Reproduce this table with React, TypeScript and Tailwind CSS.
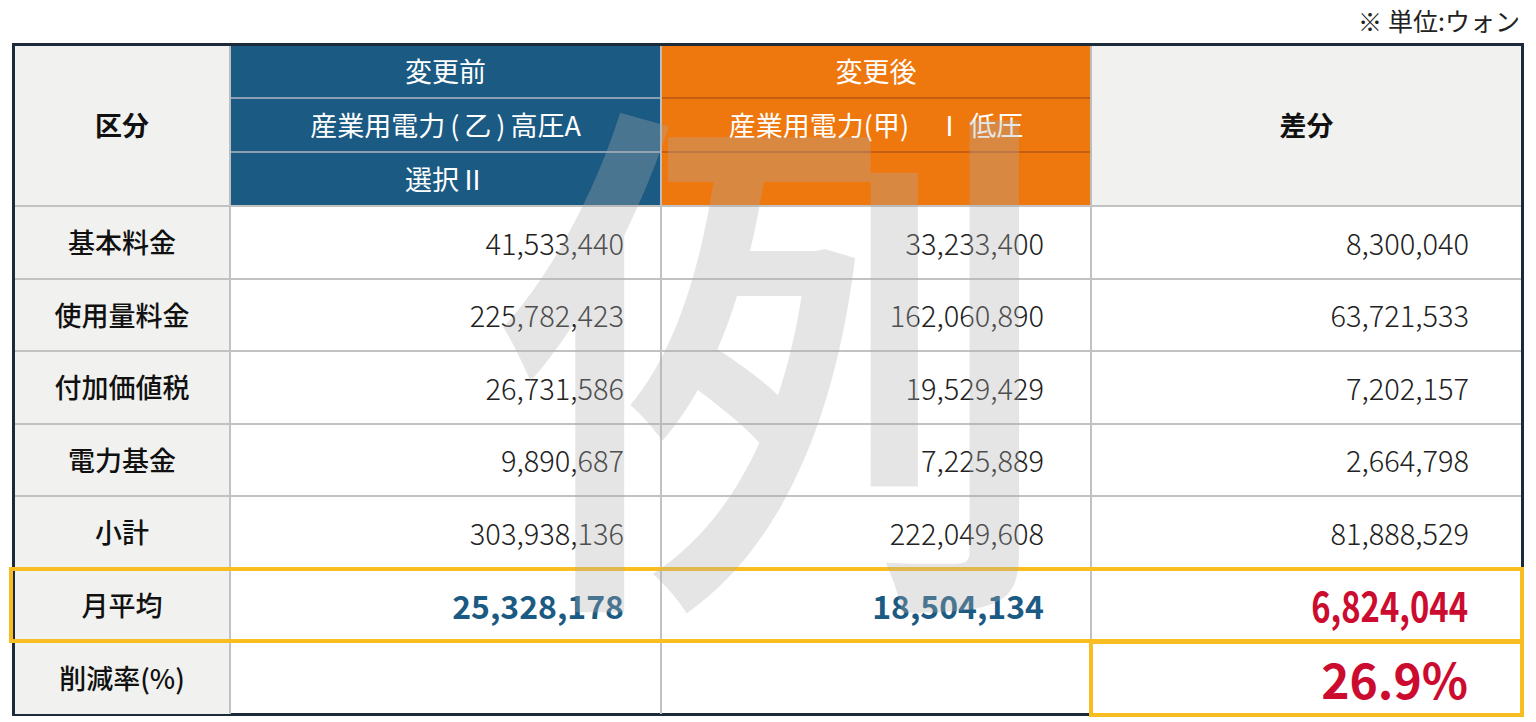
import React from "react";

const rows = [
  { label: "基本料金", before: "41,533,440", after: "33,233,400", diff: "8,300,040" },
  { label: "使用量料金", before: "225,782,423", after: "162,060,890", diff: "63,721,533" },
  { label: "付加価値税", before: "26,731,586", after: "19,529,429", diff: "7,202,157" },
  { label: "電力基金", before: "9,890,687", after: "7,225,889", diff: "2,664,798" },
  { label: "小計", before: "303,938,136", after: "222,049,608", diff: "81,888,529" },
];

const font = "font-['Noto_Sans_CJK_JP','Noto_Sans',sans-serif]";

export default function App() {
  return (
    <div className={`relative w-[1536px] h-[722px] bg-white overflow-hidden ${font}`}>
      <div className="h-[43px] flex items-center justify-end pr-[16px] pb-[2px] text-[25px] leading-none text-[#222]">
        <span className="text-[24px] font-bold mr-[6px]">※</span>単位:ウォン
      </div>

      <div className="relative mx-[12px] border-[3px] border-[#1c2b39]">
        {/* header */}
        <div className="grid grid-cols-[214px_431px_430px_431px] h-[159px]">
          <div className="bg-[#f1f1f0] flex items-center justify-center text-[27px] font-bold text-[#111]">区分</div>
          <div className="bg-[#1b5a82] border-l-2 border-[#bdbdbd] flex flex-col text-white text-[27px]">
            <div className="h-[51px] flex items-center justify-center">変更前</div>
            <div className="h-[54px] border-t-2 border-[#8a9fb1] flex items-center justify-center">
              産業用電力<span className="px-[5px]">(</span>乙<span className="px-[5px]">)</span>高圧A
            </div>
            <div className="flex-1 border-t-2 border-[#8a9fb1] flex items-center justify-center">選択Ⅱ</div>
          </div>
          <div className="bg-[#ee770e] border-l-2 border-[#bdbdbd] flex flex-col text-white text-[27px]">
            <div className="h-[51px] flex items-center justify-center">変更後</div>
            <div className="h-[54px] border-t-2 border-[#c35e12] flex items-center justify-center">産業用電力(甲)　Ⅰ 低圧</div>
            <div className="flex-1 border-t-2 border-[#c35e12]"></div>
          </div>
          <div className="bg-[#f1f1f0] border-l-2 border-[#bdbdbd] flex items-center justify-center text-[27px] font-bold text-[#111]">差分</div>
        </div>

        {/* body */}
        {rows.map((r) => (
          <div key={r.label} className="grid grid-cols-[214px_431px_430px_431px] h-[72.5px] border-t-2 border-[#c2c2c2]">
            <div className="bg-[#f1f1f0] flex items-center justify-center text-[27px] font-medium text-[#111]">{r.label}</div>
            <div className="border-l-2 border-[#c2c2c2] flex items-center justify-end pr-[36px] text-[29px] font-light text-[#222]">{r.before}</div>
            <div className="border-l-2 border-[#c2c2c2] flex items-center justify-end pr-[46px] text-[29px] font-light text-[#222]">{r.after}</div>
            <div className="border-l-2 border-[#c2c2c2] flex items-center justify-end pr-[52px] text-[29px] font-light text-[#222]">{r.diff}</div>
          </div>
        ))}

        <div className="relative grid grid-cols-[214px_431px_430px_431px] h-[72.5px] border-t-2 border-[#c2c2c2]">
          <div className="bg-[#f1f1f0] flex items-center justify-center text-[27px] font-medium text-[#111]">月平均</div>
          <div className="border-l-2 border-[#c2c2c2] flex items-center justify-end pr-[36px] text-[32px] font-bold text-[#1b5a82]">25,328,178</div>
          <div className="border-l-2 border-[#c2c2c2] flex items-center justify-end pr-[46px] text-[32px] font-bold text-[#1b5a82]">18,504,134</div>
          <div className="border-l-2 border-[#c2c2c2] flex items-center justify-end pr-[53px] text-[41px] font-bold text-[#cc0c2f]">
            <span className="inline-block scale-x-[0.8] origin-right">6,824,044</span>
          </div>
          <div className="absolute top-[-3px] bottom-[-3px] left-[-6px] right-[-3px] border-4 border-[#f8bd20] pointer-events-none"></div>
        </div>

        <div className="grid grid-cols-[214px_431px_430px_431px] h-[72.5px] border-t-2 border-[#c2c2c2]">
          <div className="bg-[#f1f1f0] flex items-center justify-center text-[27px] font-medium text-[#111]">削減率(%)</div>
          <div className="border-l-2 border-[#c2c2c2]"></div>
          <div className="border-l-2 border-[#c2c2c2]"></div>
          <div className="relative border-l-2 border-[#c2c2c2] flex items-center justify-end pr-[53px] text-[48px] font-bold text-[#cc0c2f]">
            26.9%
            <div className="absolute top-[-2px] bottom-[-3px] left-[-3px] right-[-3px] border-4 border-[#f8bd20] pointer-events-none"></div>
          </div>
        </div>

        {/* watermark */}
        <div className="absolute left-[480px] top-[16px] text-[540px] leading-none font-medium text-[rgba(175,175,175,0.32)] scale-x-[1.04] origin-left pointer-events-none select-none">
          例
        </div>
      </div>
    </div>
  );
}
